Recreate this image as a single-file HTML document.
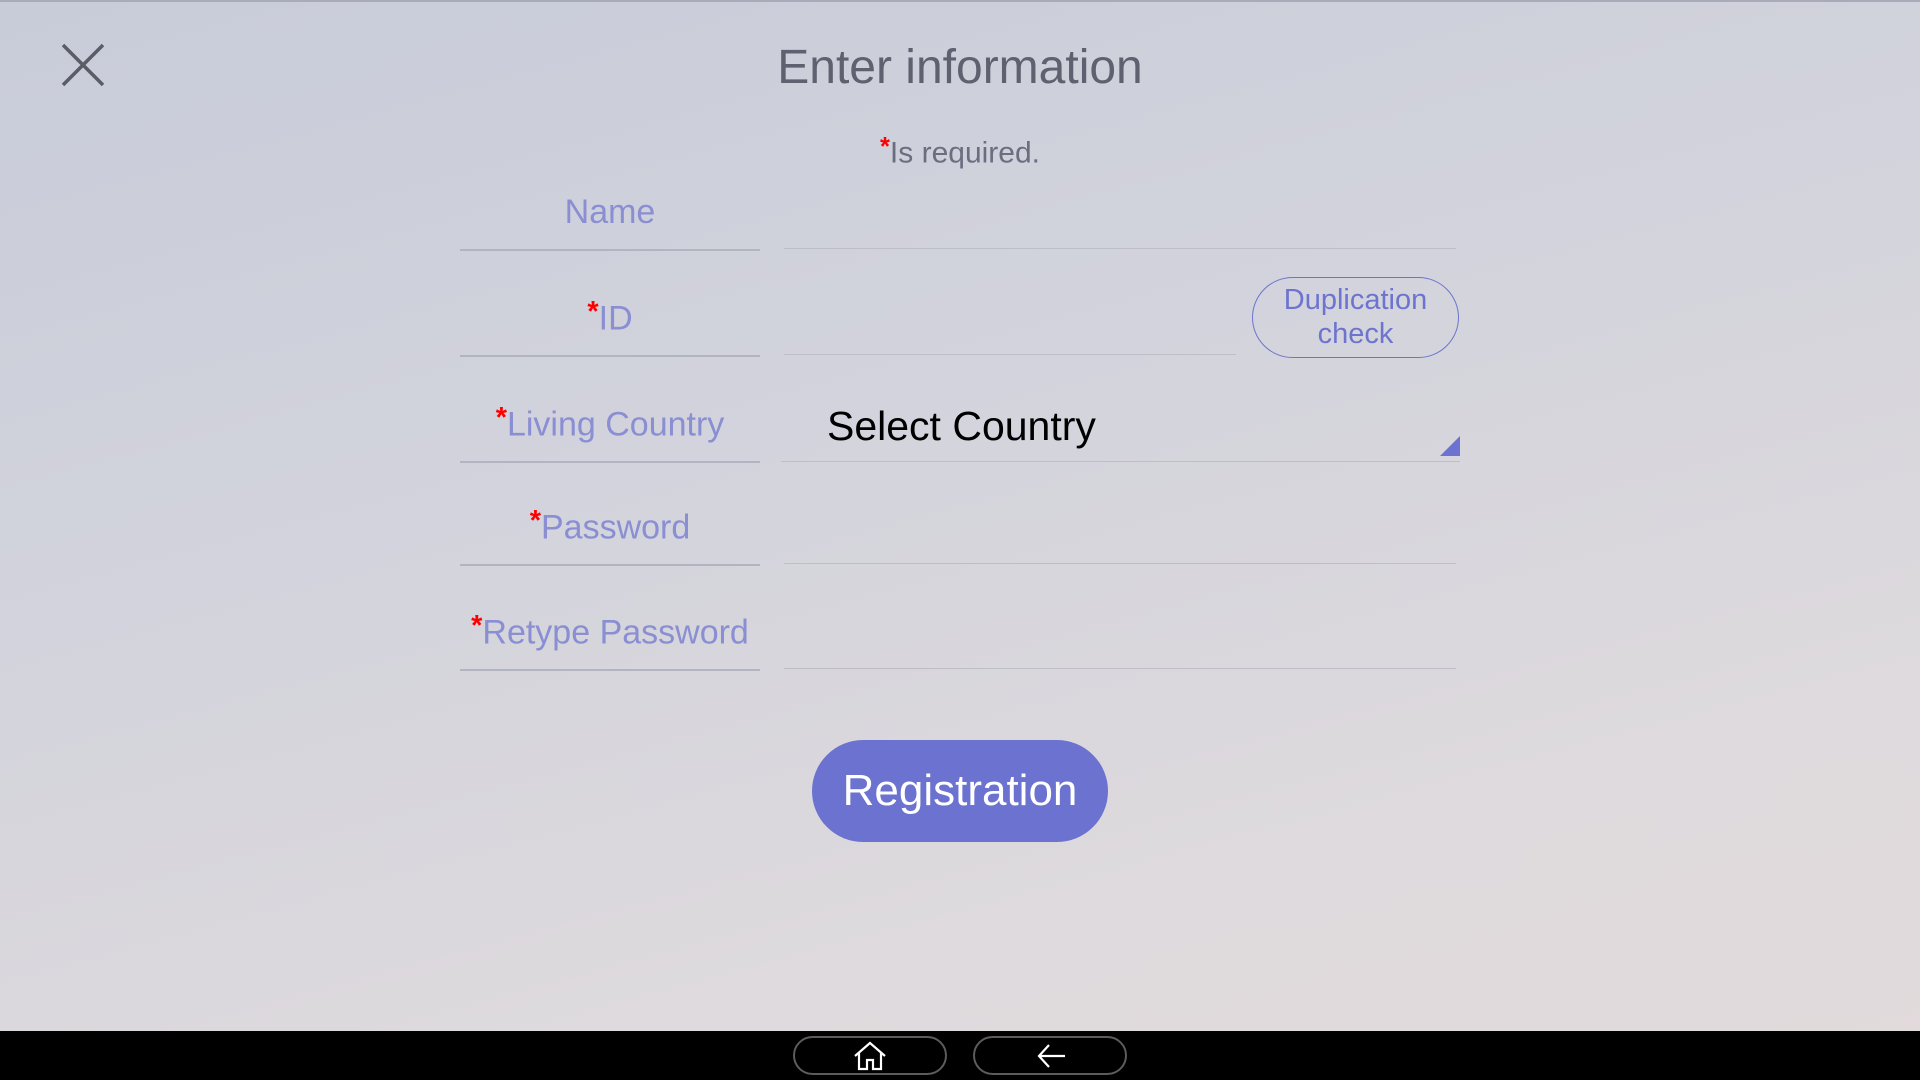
<!DOCTYPE html>
<html><head><meta charset="utf-8"><style>
*{margin:0;padding:0;box-sizing:border-box}
body{width:1920px;height:1080px;overflow:hidden;position:relative;font-family:"Liberation Sans",sans-serif;
background:linear-gradient(165deg,#c8ccd9 0%,#d2d3dc 40%,#dedadd 75%,#e2dadb 100%)}
.abs{position:absolute}
.title{left:0;width:1920px;top:40px;text-align:center;font-size:48px;color:#5f6170}
.req{left:0;width:1920px;top:133px;text-align:center;font-size:30px;color:#6b6e80}
.star{color:#f00;font-size:0.85em;vertical-align:0.3em;font-weight:bold}
.lab{left:460px;width:300px;text-align:center;font-size:34px;color:#8a8ed2;white-space:nowrap}
.lu{left:460px;width:300px;height:2px;background:#b2b4c1}
.iu{left:784px;width:672px;height:1px;background:#bdbec8}
.dup{left:1252px;top:277px;width:207px;height:81px;border:1.5px solid #6d74cf;border-radius:41px;color:#6d74cf;font-size:29px;text-align:center;line-height:34px;padding-top:5px}
.sel{left:827px;top:403px;font-size:41px;color:#000}
.reg{left:812px;top:740px;width:296px;height:102px;border-radius:51px;background:#6b72cf;color:#fff;font-size:44px;text-align:center;line-height:102px}
.nav{left:0;top:1031px;width:1920px;height:49px;background:#000}
.nb{top:1036px;width:154px;height:39px;border:2px solid #5c5c5c;border-radius:20px}
</style></head><body>
<div class="abs" style="left:0;top:0;width:1920px;height:2px;background:#a9acb8"></div>
<svg class="abs" style="left:61px;top:43px" width="44" height="44" viewBox="0 0 44 44"><path d="M2 2L42 42M42 2L2 42" stroke="#5a5c66" stroke-width="3.5" fill="none"/></svg>
<div class="abs title">Enter information</div>
<div class="abs req"><span class="star">*</span>Is required.</div>

<div class="abs lab" style="top:193px">Name</div>
<div class="abs lu" style="top:249px"></div><div class="abs iu" style="top:248px"></div>

<div class="abs lab" style="top:296px"><span class="star">*</span>ID</div>
<div class="abs lu" style="top:355px"></div><div class="abs iu" style="top:354px;width:452px"></div>
<div class="abs dup">Duplication<br>check</div>

<div class="abs lab" style="top:402px"><span class="star">*</span>Living Country</div>
<div class="abs lu" style="top:461px"></div><div class="abs iu" style="top:461px;left:781px;width:679px"></div>
<div class="abs sel">Select Country</div>
<svg class="abs" style="left:1440px;top:436px" width="20" height="20"><path d="M20 0L20 20L0 20Z" fill="#6b72cf"/></svg>

<div class="abs lab" style="top:505px"><span class="star">*</span>Password</div>
<div class="abs lu" style="top:564px"></div><div class="abs iu" style="top:563px"></div>

<div class="abs lab" style="top:610px"><span class="star">*</span>Retype Password</div>
<div class="abs lu" style="top:669px"></div><div class="abs iu" style="top:668px"></div>

<div class="abs reg">Registration</div>

<div class="abs nav"></div>
<div class="abs nb" style="left:793px"></div>
<div class="abs nb" style="left:973px"></div>
<svg class="abs" style="left:853px;top:1041px" width="34" height="30" viewBox="0 0 34 30"><path d="M2 15L17 2L32 15M6 12V28H14V19H20V28H28V12" stroke="#fff" stroke-width="2.2" fill="none"/></svg>
<svg class="abs" style="left:1037px;top:1043px" width="30" height="26" viewBox="0 0 30 26"><path d="M12 2L2 13L12 24M2 13H28" stroke="#fff" stroke-width="2.2" fill="none"/></svg>
</body></html>
